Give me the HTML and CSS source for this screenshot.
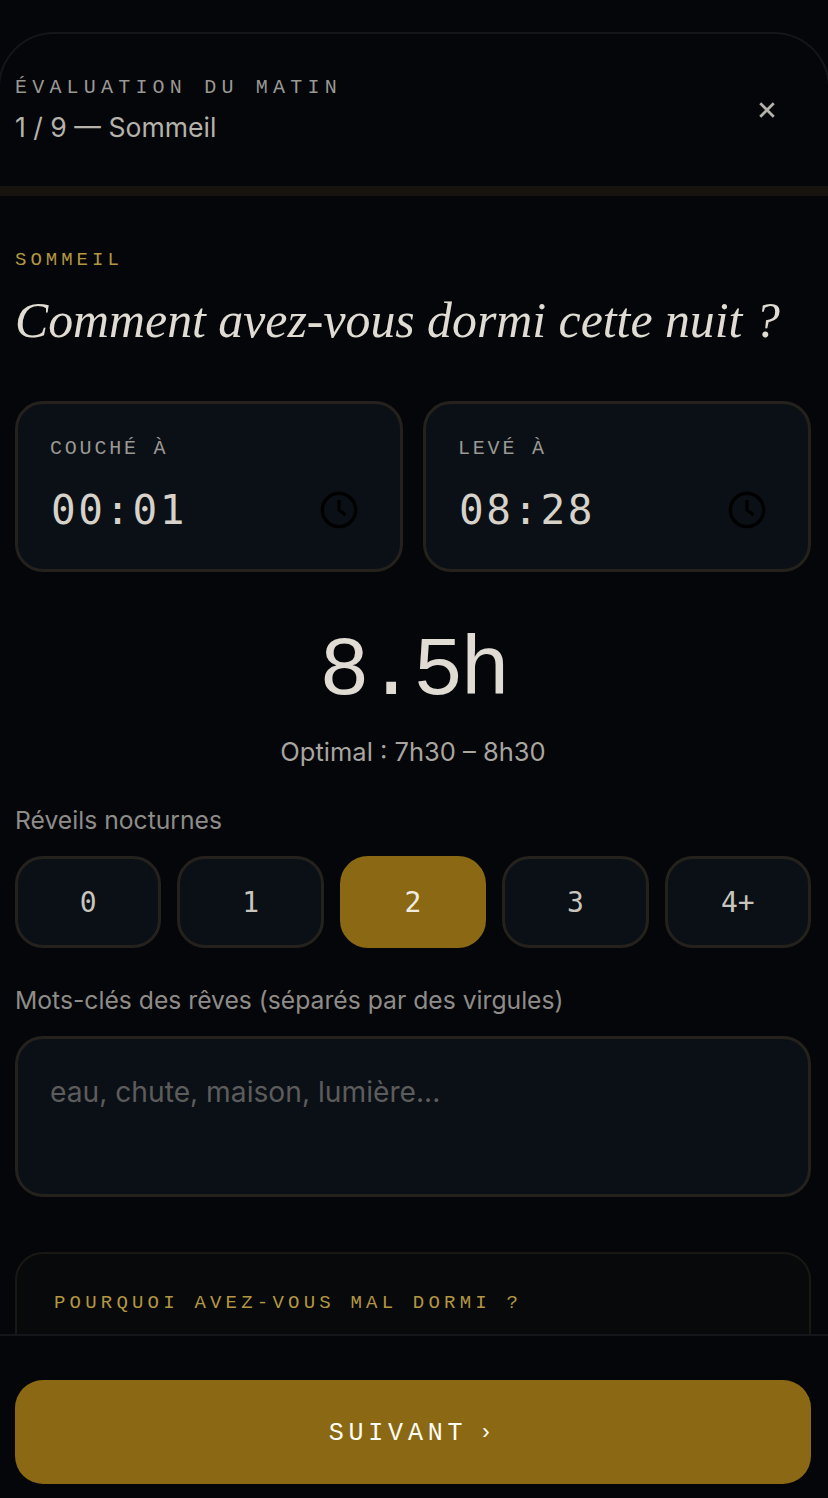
FILE: index.html
```html
<!DOCTYPE html>
<html lang="fr">
<head>
<meta charset="utf-8">
<title>Évaluation du matin</title>
<link rel="stylesheet" href="styles.css">
</head>
<body>
<div class="sheet">
  <header class="head">
    <div>
      <div class="eyebrow">ÉVALUATION DU MATIN</div>
      <div class="step">1 / 9 — Sommeil</div>
    </div>
    <svg class="close" viewBox="0 0 20 20"><path d="M2.5 2.5l15 15M17.5 2.5l-15 15"/></svg>
  </header>
  <div class="progress"></div>
  <main class="content">
    <div class="section">SOMMEIL</div>
    <h1 class="title">Comment avez-vous dormi cette nuit ?</h1>
    <div class="times">
      <div class="time-card">
        <div class="time-label">COUCHÉ À</div>
        <div class="time-row"><span class="time-value">00:01</span>
          <svg class="clock" viewBox="0 0 24 24"><circle cx="12" cy="12" r="10"/><path d="M12 6v6l4 3"/></svg></div>
      </div>
      <div class="time-card">
        <div class="time-label">LEVÉ À</div>
        <div class="time-row"><span class="time-value">08:28</span>
          <svg class="clock" viewBox="0 0 24 24"><circle cx="12" cy="12" r="10"/><path d="M12 6v6l4 3"/></svg></div>
      </div>
    </div>
    <div class="duration">8.5h</div>
    <div class="optimal">Optimal : 7h30 – 8h30</div>
    <div class="field-label">Réveils nocturnes</div>
    <div class="wakes">
      <div class="wake">0</div><div class="wake">1</div><div class="wake active">2</div><div class="wake">3</div><div class="wake">4+</div>
    </div>
    <div class="field-label dreams">Mots-clés des rêves (séparés par des virgules)</div>
    <div class="textarea">eau, chute, maison, lumière...</div>
    <div class="why">POURQUOI AVEZ-VOUS MAL DORMI ?</div>
  </main>
  <footer class="foot"><div class="next">SUIVANT <span class="chev">›</span></div></footer>
</div>
</body>
</html>
```
FILE: styles.css
```css
* { box-sizing: border-box; }
html, body { margin: 0; height: 100%; background: #040609; overflow: hidden; }
body { font-family: "Inter", "Noto Sans", sans-serif; color: #e0dcd4; }
.sheet { height: 1498px; padding-top: 32px; position: relative; overflow: hidden; }
.head { height: 154px; border: 2px solid #15161a; border-bottom: 0; border-radius: 56px 56px 0 0; margin: 0 -2px; padding: 0 52px 0 15px; display: flex; justify-content: space-between; align-items: center; }
.eyebrow { font-family: "Liberation Mono", monospace; font-size: 20px; letter-spacing: 5.2px; color: #9a9894; line-height: 28px; margin-top: -1px; }
.step { font-size: 26.6px; color: #b5b2ab; line-height: 38px; margin-top: 6px; }
.close { width: 18px; height: 18px; fill: none; stroke: #b5b2ab; stroke-width: 3; }
.progress { height: 10px; background: #17140f; }
.content { padding: 0 17px 0 15px; }
.section { margin-top: 52px; font-family: "Liberation Mono", monospace; font-size: 19px; letter-spacing: 4px; color: #b39642; line-height: 24px; }
.title { margin: 17px 0 0; font-family: "Liberation Serif", serif; font-style: italic; font-weight: 400; font-size: 49.8px; line-height: 64px; color: #e0dcd4; white-space: nowrap; }
.times { display: grid; grid-template-columns: 1fr 1fr; gap: 20px; margin-top: 48px; }
.time-card { height: 171px; background: #0b1016; border: 3px solid #25221e; border-radius: 28px; padding: 31px 32px 0; }
.time-label { font-family: "Liberation Mono", monospace; font-size: 20px; letter-spacing: 2.8px; color: #9a9894; line-height: 28px; }
.time-row { display: flex; justify-content: space-between; align-items: center; margin-top: 17px; padding-right: 9px; }
.time-value { font-family: "DejaVu Sans Mono", monospace; font-size: 41px; letter-spacing: 2.5px; color: #d6d2ca; line-height: 60px; margin-left: 1px; }
.clock { width: 40px; height: 40px; fill: none; stroke: #000; stroke-width: 2; }
.duration { margin-top: 50px; text-align: center; font-family: "Liberation Mono", monospace; font-size: 84px; letter-spacing: -3.5px; line-height: 100px; color: #e0dcd4; }
.optimal { margin-top: 12px; text-align: center; font-size: 25.5px; line-height: 36px; color: #a8a5a0; }
.field-label { margin-top: 32px; font-size: 24.7px; line-height: 36px; color: #8e8c88; }
.wakes { display: grid; grid-template-columns: repeat(5, 1fr); gap: 16px; margin-top: 18px; }
.wake { height: 92px; display: flex; align-items: center; justify-content: center; background: #0b1016; border: 3px solid #25221e; border-radius: 28px; font-family: "DejaVu Sans Mono", monospace; font-size: 28px; color: #c8c5be; }
.wake.active { background: #8b6914; border-color: #8b6914; color: #f0ece0; }
.dreams { margin-top: 34px; }
.textarea { margin-top: 18px; height: 161px; background: #0b1016; border: 3px solid #25221e; border-radius: 28px; padding: 33px 32px; font-size: 28.2px; line-height: 40px; color: #5c5c5c; }
.why { margin-top: 55px; height: 200px; background: #07090b; border: 2px solid #1a1814; border-radius: 28px; padding: 38px 37px; font-family: "Liberation Mono", monospace; font-size: 19px; letter-spacing: 4.2px; color: #b39642; }
.foot { position: absolute; left: 0; right: 0; bottom: 0; height: 164px; background: #040609; border-top: 2px solid #15161a; padding: 44px 17px 14px 15px; }
.next { height: 104px; border-radius: 28px; background: #8b6914; display: flex; align-items: center; justify-content: center; font-family: "Liberation Mono", monospace; font-size: 25px; letter-spacing: 4.8px; color: #fffdf5; padding-top: 2px; }
.chev { margin-left: 12px; font-size: 22px; }
```
